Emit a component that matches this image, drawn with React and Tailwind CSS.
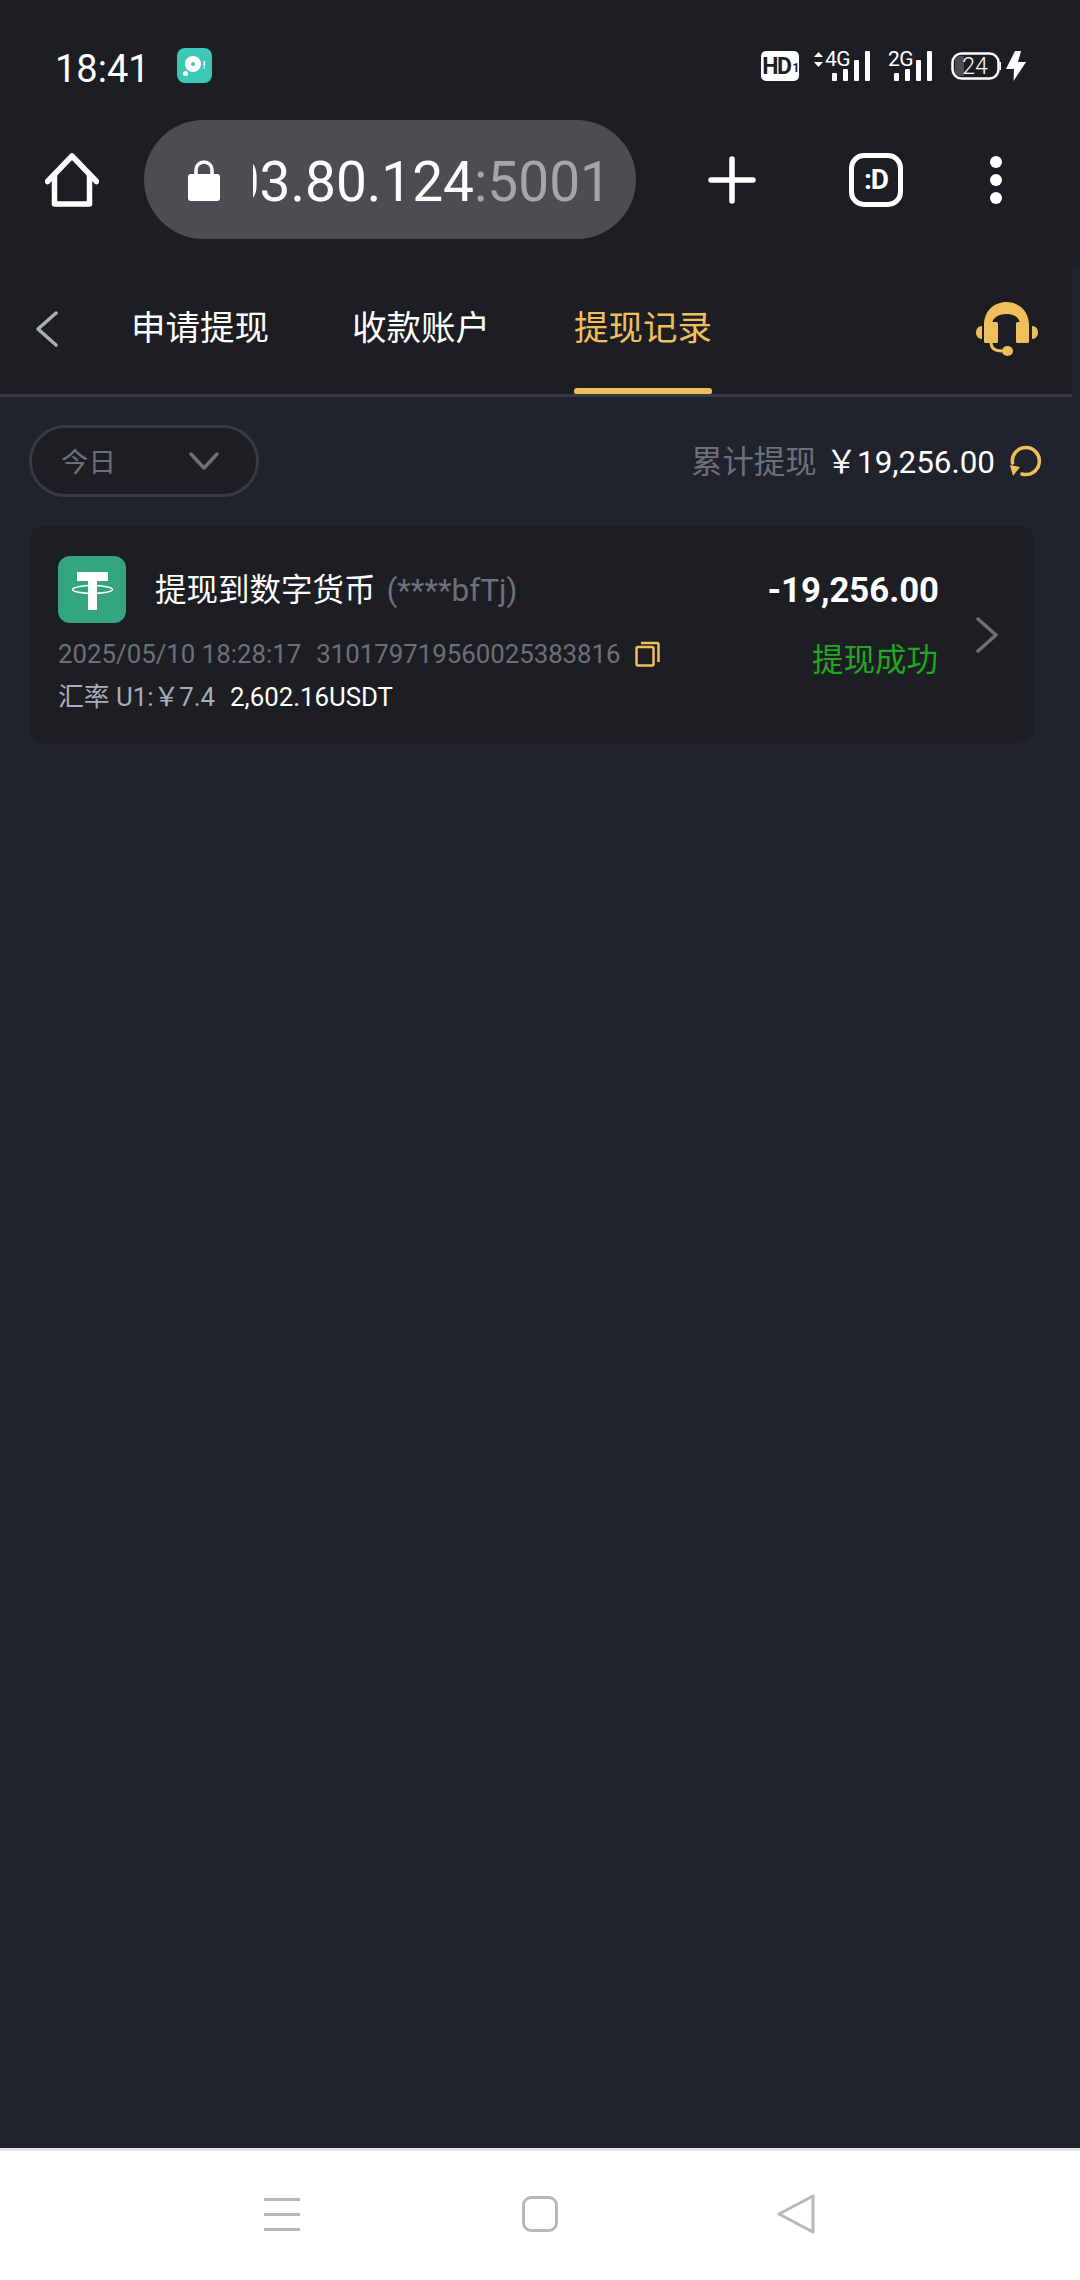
import React from 'react';

const roboto = "font-['Roboto','Noto_Sans_CJK_SC',sans-serif]";

const SignalBars = ({ className }) => (
    <svg className={className} width="38" height="30" viewBox="0 0 38 30" fill="#fff">
        <rect x="0" y="22" width="5" height="8" rx="1" />
        <rect x="11" y="18" width="5" height="12" rx="1" />
        <rect x="22" y="9" width="5" height="21" rx="1" />
        <rect x="33" y="0" width="5" height="30" rx="1" />
    </svg>
);

const StatusBar = () => (
    <div className="h-[120px] flex items-start justify-between pt-[51px] pl-[55px] pr-[54px]">
        <div className="flex items-start">
            <span className="mt-[3px] text-[38px] leading-[30px] text-white">18:41</span>
            <div className="ml-[27px] -mt-[3px] w-[35px] h-[35px] rounded-[8px] bg-[#3bc9b5] flex items-center justify-center">
                <svg width="25" height="25" viewBox="0 0 25 25">
                    <circle cx="11" cy="11" r="8" fill="#fff" />
                    <circle cx="11" cy="11" r="2" fill="#3bc9b5" />
                    <circle cx="3.5" cy="20.5" r="2.5" fill="#fff" />
                    <rect x="21.5" y="8" width="1.5" height="5" fill="#fff" />
                    <rect x="21.5" y="14" width="1.5" height="1.5" fill="#fff" />
                </svg>
            </div>
        </div>
        <div className="flex items-start">
            <div className="w-[38px] h-[30px] rounded-[5px] bg-white flex items-center justify-center text-[#1c1e23] font-bold text-[23px] leading-none tracking-[-1.5px]">
                HD<span className="text-[12px] mt-[3px] ml-[2px]">1</span>
            </div>
            <div className="relative ml-[15px] w-[56px] h-[30px]">
                <svg className="absolute left-0 top-[1px]" width="9" height="15" viewBox="0 0 9 15" fill="#fff">
                    <path d="M4.5 0 L9 5 H0 Z M4.5 15 L0 10 H9 Z" />
                </svg>
                <span className="absolute left-[11px] -top-[1px] text-[21px] leading-[18px] text-white tracking-[-0.5px]">4G</span>
                <SignalBars className="absolute left-[18px] top-0" />
            </div>
            <div className="relative ml-[18px] w-[44px] h-[30px]">
                <span className="absolute left-0 -top-[1px] text-[21px] leading-[18px] text-white tracking-[-0.5px]">2G</span>
                <SignalBars className="absolute left-[6px] top-0" />
            </div>
            <div className="relative ml-[19px] mt-[1px] w-[50px] h-[28px]">
                <svg className="absolute inset-0" width="50" height="28" viewBox="0 0 50 28" fill="none">
                    <rect x="1.5" y="1.5" width="46" height="25" rx="9" stroke="#fff" strokeWidth="2.5" />
                    <path d="M4 9 a5 5 0 0 1 5 -5 h4 v20 h-4 a5 5 0 0 1 -5 -5 Z" fill="#4c4d52" />
                    <rect x="48.5" y="10" width="1.5" height="8" fill="#fff" />
                </svg>
                <span className="absolute inset-0 flex items-center justify-center text-[23px] leading-none font-light text-white pr-[2px]">24</span>
            </div>
            <svg className="ml-[5px]" width="20" height="30" viewBox="0 0 20 30" fill="#fff">
                <path d="M9 0 L0 18 H8 L7.5 30 L20 11 H12 L15 0 Z" />
            </svg>
        </div>
    </div>
);

const Toolbar = () => (
    <div className="h-[147px] flex items-start">
        <svg className="ml-[45px] mt-[33px]" width="54" height="54" viewBox="0 0 54 54" fill="none" stroke="#fff" strokeWidth="5.5" strokeLinecap="round" strokeLinejoin="round">
            <path d="M2.5 28.5 L27 3 L51.5 28.5" />
            <path d="M9.5 22 V51 H44.5 V22" />
        </svg>
        <div className="ml-[45px] w-[492px] h-[119px] rounded-full bg-[#4c4d52] flex items-center">
            <svg className="ml-[44px] shrink-0" width="32" height="42" viewBox="0 0 32 42" fill="#fff">
                <path d="M8 17 V11 a8 8 0 0 1 16 0 V17" fill="none" stroke="#fff" strokeWidth="3.5" />
                <rect x="0" y="15" width="32" height="27" rx="3" />
            </svg>
            <div className="ml-[33px] mt-[5px] w-[358px] overflow-hidden flex justify-end whitespace-nowrap text-[55px] leading-[60px]">
                <span className="text-white">103.80.124</span>
                <span className="text-[#a5a6a9]">:5001</span>
            </div>
        </div>
        <svg className="ml-[72px] mt-[36px]" width="48" height="48" viewBox="0 0 48 48" stroke="#fff" strokeWidth="5.5" strokeLinecap="round">
            <path d="M24 3 V45 M3 24 H45" />
        </svg>
        <div className="ml-[93px] mt-[33px] w-[54px] h-[54px] rounded-[15px] border-[5px] border-white flex items-center justify-center text-white font-bold text-[28px] leading-none tracking-[-1px]">
            :D
        </div>
        <div className="ml-[87px] mt-[36px] flex flex-col gap-[6px]">
            <div className="w-[12px] h-[12px] rounded-full bg-white" />
            <div className="w-[12px] h-[12px] rounded-full bg-white" />
            <div className="w-[12px] h-[12px] rounded-full bg-white" />
        </div>
    </div>
);

const Tabs = () => (
    <div className="w-[1072px] h-[130px] bg-[#1c1e23] border-b-[3px] border-[#363a45] flex items-start">
        <svg className="ml-[35px] mt-[44px]" width="24" height="36" viewBox="0 0 24 36" fill="none" stroke="#a9adb6" strokeWidth="3.5" strokeLinecap="round" strokeLinejoin="round">
            <path d="M21 2 L3 18 L21 34" />
        </svg>
        <div className="ml-[72px] h-[127px] flex items-start text-[34.5px] leading-[40px] text-white">
            <span className="mt-[41px] whitespace-nowrap">申请提现</span>
            <span className="ml-[83px] mt-[41px] whitespace-nowrap">收款账户</span>
            <div className="ml-[84px] h-full flex flex-col justify-between text-[#efbf5b]">
                <span className="mt-[41px] whitespace-nowrap">提现记录</span>
                <div className="h-[6px] rounded-t-[3px] rounded-b-[2px] bg-[#efbf5b]" />
            </div>
        </div>
        <svg className="ml-auto mr-[34px] mt-[34px]" width="64" height="58" viewBox="0 0 64 58" fill="#efbf5b">
            <path d="M10 24 C10 10 20 1 32.5 1 C45 1 55 10 55 24 H46 C46 17 41 13 32.5 13 C24 13 18 17 18 24 Z" />
            <rect x="10" y="21" width="14" height="21" rx="1.5" />
            <rect x="42" y="21" width="13" height="21" rx="1.5" />
            <path d="M8 25 V38 C4 38 2 35 2 31.5 C2 28 4 25 8 25 Z" />
            <path d="M58 25 V38 C62 38 64 35 64 31.5 C64 28 62 25 58 25 Z" />
            <path d="M17 41 C17 47 20 50 28 50" fill="none" stroke="#efbf5b" strokeWidth="3" />
            <ellipse cx="33.5" cy="50" rx="5.5" ry="5" />
        </svg>
    </div>
);

const FilterRow = () => (
    <div className="mt-[28px] pl-[29px] pr-[38px] flex items-center justify-between">
        <div className="w-[230px] h-[72px] rounded-full bg-[#1c1e23] border-[3px] border-[#363a45] flex items-center justify-between pl-[29px] pr-[37px] text-[27.5px] text-[#6d7079]">
            <span className="mt-[3px]">今日</span>
            <svg width="30" height="18" viewBox="0 0 30 18" fill="none" stroke="#6d7079" strokeWidth="3.5" strokeLinecap="round" strokeLinejoin="round">
                <path d="M2 2 L15 16 L28 2" />
            </svg>
        </div>
        <div className="flex items-center text-[31.4px] leading-[36px]">
            <span className="mt-[3px] text-[#6d7079] whitespace-nowrap">累计提现</span>
            <span className="mt-[3px] ml-[9px] text-white whitespace-nowrap">￥19,256.00</span>
            <svg className="ml-[15px]" width="32" height="32" viewBox="0 0 32 32" fill="none" stroke="#efbf5b" strokeWidth="3.5">
                <path d="M2.5 18 A13.5 13.5 0 1 1 12 29" strokeLinecap="round" />
                <path d="M0 20 L10 22 L3 31 Z" fill="#efbf5b" stroke="none" />
            </svg>
        </div>
    </div>
);

const RecordCard = () => (
    <div className="mt-[29px] ml-[29px] w-[1005px] h-[217px] rounded-[14px] bg-[#1c1e23] flex">
        <div className="ml-[29px] flex-1">
            <div className="mt-[30px] flex items-center">
                <div className="w-[68px] h-[67px] rounded-[12px] bg-[#33a67f] flex items-center justify-center">
                    <svg width="44" height="40" viewBox="0 0 44 40" fill="#fff">
                        <rect x="7" y="2" width="31" height="9" />
                        <rect x="18" y="2" width="9" height="38" />
                        <ellipse cx="22.5" cy="19.5" rx="20" ry="4" fill="none" stroke="#fff" strokeWidth="1.5" />
                    </svg>
                </div>
                <div className="ml-[29px] mt-[3px] text-[31.5px] leading-[40px] whitespace-nowrap">
                    <span className="text-white">提现到数字货币</span>
                    <span className="ml-[11px] text-[#6d7079]">(****bfTj)</span>
                </div>
            </div>
            <div className="mt-[16px] flex items-center text-[25.8px] leading-[30px] text-[#6d7079] whitespace-nowrap">
                <span>2025/05/10 18:28:17</span>
                <span className="ml-[15px]">310179719560025383816</span>
                <svg className="ml-[14px]" width="25" height="26" viewBox="0 0 25 26" fill="none" stroke="#efbf5b" strokeWidth="2.5">
                    <rect x="1.5" y="6" width="17" height="18.5" rx="1.5" />
                    <path d="M6 2 H22 Q23.5 2 23.5 3.5 V21" />
                </svg>
            </div>
            <div className="mt-[13px] flex items-center text-[25.8px] leading-[30px] whitespace-nowrap">
                <span className="text-[#a9adb6]">汇率 U1:￥7.4</span>
                <span className="ml-[15px] text-white">2,602.16USDT</span>
            </div>
        </div>
        <div className="mt-[44px] flex flex-col items-end whitespace-nowrap">
            <span className="text-[34.7px] leading-[40px] font-bold text-white">-19,256.00</span>
            <span className="mt-[31px] mr-[1px] text-[31.5px] leading-[40px] text-[#1fa81f]">提现成功</span>
        </div>
        <svg className="ml-[37px] mr-[36px] mt-[91px]" width="22" height="36" viewBox="0 0 22 36" fill="none" stroke="#6d7079" strokeWidth="3.5" strokeLinecap="round" strokeLinejoin="round">
            <path d="M2 2 L20 18 L2 34" />
        </svg>
    </div>
);

const NavBar = () => (
    <div className="h-[132px] bg-white border-t-[3px] border-[#e3e5e3] flex items-start">
        <div className="ml-[264px] mt-[47px] w-[36px] flex flex-col gap-[12px]">
            <div className="h-[3px] bg-[#b8b8b8]" />
            <div className="h-[3px] bg-[#b8b8b8]" />
            <div className="h-[3px] bg-[#b8b8b8]" />
        </div>
        <div className="ml-[222px] mt-[45px] w-[36px] h-[36px] rounded-[9px] border-[3px] border-[#b8b8b8]" />
        <svg className="ml-[219px] mt-[43px]" width="38" height="40" viewBox="0 0 38 40" fill="none" stroke="#b8b8b8" strokeWidth="3" strokeLinejoin="round">
            <path d="M36 2 V38 L2 20 Z" />
        </svg>
    </div>
);

const App = () => {
    return (
        <div className={`w-[1080px] h-[2280px] overflow-hidden flex flex-col bg-[#20232c] ${roboto}`}>
            <div className="bg-[#1c1e23]">
                <StatusBar />
                <Toolbar />
            </div>
            <Tabs />
            <div className="flex-1">
                <FilterRow />
                <RecordCard />
            </div>
            <NavBar />
        </div>
    );
};

export default App;
